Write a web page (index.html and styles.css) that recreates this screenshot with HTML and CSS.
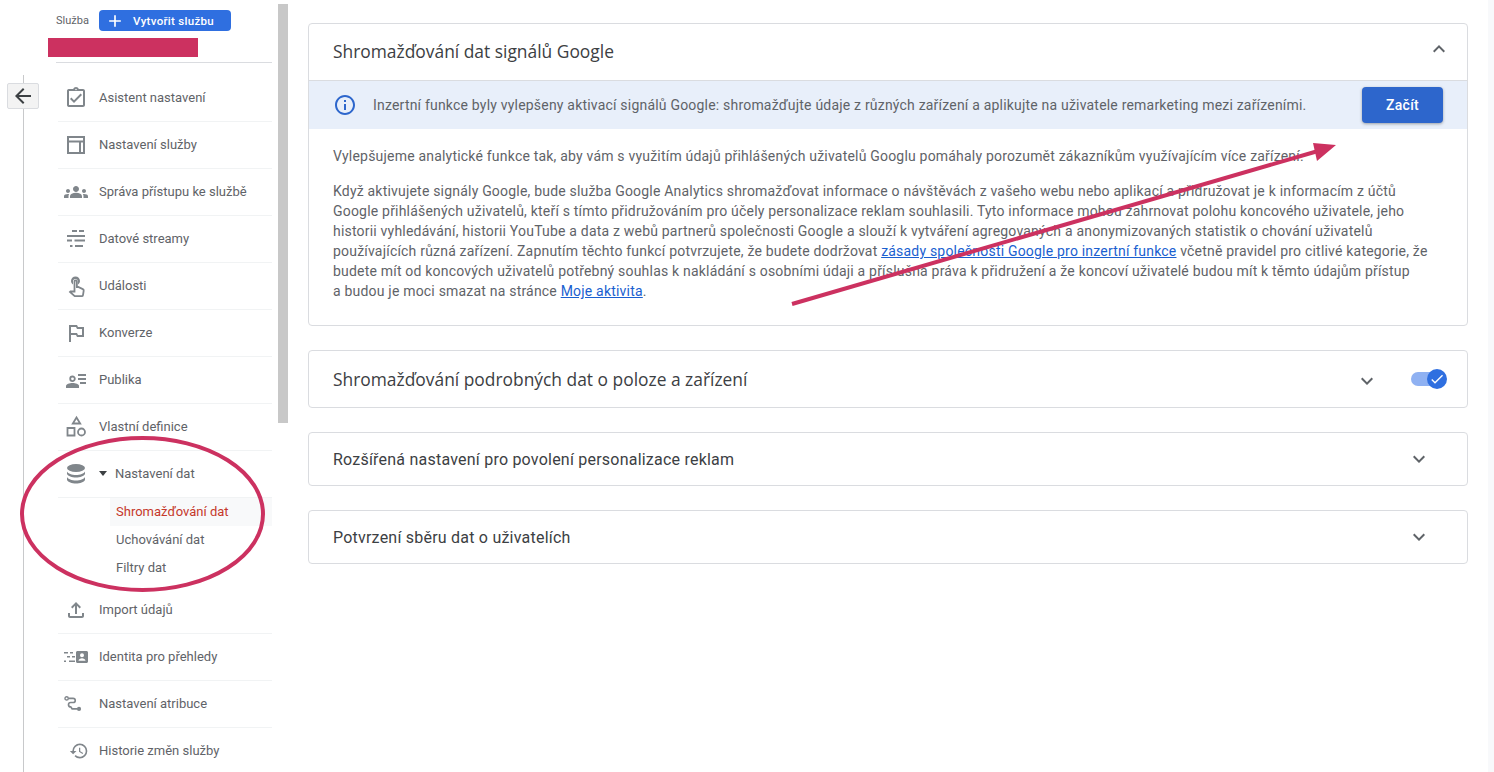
FILE: index.html
```html
<!DOCTYPE html>
<html lang="cs">
<head>
    <meta charset="UTF-8">
    <title>Shromažďování dat</title>
    <link rel="stylesheet" href="styles.css">
</head>
<body>
<div class="page">
    <!-- Back rail -->
    <div class="rail">
        <button class="back-btn">
            <svg viewBox="0 0 24 24" width="24" height="24"><path d="M20 11H7.83l5.59-5.59L12 4l-8 8 8 8 1.41-1.41L7.83 13H20v-2z"/></svg>
        </button>
    </div>

    <!-- Sidebar -->
    <div class="sidebar">
        <div class="side-head">
            <span class="side-label">Služba</span>
            <button class="create-btn">
                <svg viewBox="0 0 24 24" width="20" height="20"><path d="M19 13h-6v6h-2v-6H5v-2h6V5h2v6h6v2z"/></svg>
                Vytvořit službu
            </button>
        </div>
        <div class="side-picker"></div>

        <div class="nav-row">
            <svg class="nav-icon" viewBox="0 0 24 24"><path d="M18 9l-1.41-1.42L10 14.17l-2.59-2.58L6 13l4 4zm1-6h-4.18C14.4 1.84 13.3 1 12 1c-1.3 0-2.4.84-2.82 2H5c-.14 0-.27.01-.4.04-.39.08-.74.28-1.01.55-.18.18-.33.4-.43.64-.1.23-.16.49-.16.77v14c0 .27.06.54.16.78s.25.45.43.64c.27.27.62.47 1.01.55.13.02.26.03.4.03h14c1.1 0 2-.9 2-2V5c0-1.1-.9-2-2-2zm-7-.25c.41 0 .75.34.75.75s-.34.75-.75.75-.75-.34-.75-.75.34-.75.75-.75zM19 19H5V5h14v14z"/></svg>
            Asistent nastavení
        </div>
        <div class="nav-row">
            <svg class="nav-icon" viewBox="0 0 24 24"><path d="M3 3h18v18H3V3zm2 2v2.500h14V5H5zm0 4.500V19h10V9.500H5zm12 0V19h2V9.500h-2z"/></svg>
            Nastavení služby
        </div>
        <div class="nav-row">
            <svg class="nav-icon" viewBox="0 0 24 24"><path d="M4 13c1.1 0 2-.9 2-2s-.9-2-2-2-2 .9-2 2 .9 2 2 2zm1.13 1.1C4.76 14.04 4.39 14 4 14c-.99 0-1.93.21-2.78.58C.48 14.9 0 15.62 0 16.43V18h4.5v-1.61c0-.83.23-1.61.63-2.29zM20 13c1.1 0 2-.9 2-2s-.9-2-2-2-2 .9-2 2 .9 2 2 2zm4 3.43c0-.81-.48-1.53-1.22-1.85C21.93 14.21 20.99 14 20 14c-.39 0-.76.04-1.13.1.4.68.63 1.46.63 2.29V18H24v-1.57zM16.24 13.65c-1.17-.52-2.61-.9-4.24-.9-1.63 0-3.07.39-4.24.9C6.68 14.13 6 15.21 6 16.39V18h12v-1.61c0-1.18-.68-2.26-1.76-2.74zM12 12c1.66 0 3-1.34 3-3s-1.34-3-3-3-3 1.34-3 3 1.34 3 3 3z"/></svg>
            Správa přístupu ke službě
        </div>
        <div class="nav-row">
            <svg class="nav-icon" viewBox="0 0 24 24"><path d="M8 3h5v2H8zM15 3h5v2h-5zM3 8h18v2H3zM3 12.500h5v2H3zM10.500 12.500H21v2H10.500zM6 18h2.500v2H6zM11 18h8v2h-8z"/></svg>
            Datové streamy
        </div>
        <div class="nav-row">
            <svg class="nav-icon" viewBox="0 0 24 24"><path d="M9 10.500V7.500a2.500 2.500 0 0 1 5 0v3c1.200-.8 2-2 2-3.500 0-2.500-2-4.500-4.500-4.500S7 4.500 7 7c0 1.500.8 2.700 2 3.500z"/><path class="nav-line" d="M10.500 17.500V7.500a1.200 1.200 0 0 1 2.400 0V13h1.300l4.600 2.100c.6.300 1 .9.900 1.500l-.7 4.500c-.1.600-.7 1.100-1.300 1.100h-6.300c-.4 0-.7-.1-1-.4L6 17.900l.5-.5z"/></svg>
            Události
        </div>
        <div class="nav-row">
            <svg class="nav-icon" viewBox="0 0 24 24"><path d="M14 6l-1-2H5v17h2v-7h5l1 2h7V6h-6zm4 8h-4l-1-2H7V6h5l1 2h5v6z"/></svg>
            Konverze
        </div>
        <div class="nav-row">
            <svg class="nav-icon" viewBox="0 0 24 24"><path d="M14 6h8v2h-8zM14 10h8v2h-8zM16 14h6v2h-6z"/><path class="nav-line" d="M8.500 8.500a2.300 2.300 0 1 1 0 4.600 2.300 2.300 0 0 1 0-4.600z"/><path d="M2 20v-2c0-1.800 3.500-3 6.500-3s6.500 1.200 6.500 3v2H2z"/></svg>
            Publika
        </div>
        <div class="nav-row">
            <svg class="nav-icon" viewBox="0 0 24 24"><path class="nav-line" d="M12.500 2.500l3.700 6H8.800zM3.500 13h7v7.500h-7z"/><circle class="nav-line" cx="17.500" cy="17" r="3.500"/></svg>
            Vlastní definice
        </div>
        <div class="nav-row nav-open">
            <svg class="nav-icon" viewBox="0 0 24 24"><ellipse cx="12" cy="6" rx="9" ry="4"/><path d="M3 9.500c1 2.300 4.800 3.500 9 3.500s8-1.200 9-3.500V12c-1 2.300-4.800 3.500-9 3.500S4 14.300 3 12zM3 15c1 2.300 4.800 3.500 9 3.500s8-1.200 9-3.500v3c-1 2.300-4.800 3.500-9 3.500S4 20.300 3 18z"/></svg>
            <span class="caret"></span>
            Nastavení dat
        </div>
        <div class="sub-list">
            <div class="sub-item active">Shromažďování dat</div>
            <div class="sub-item">Uchovávání dat</div>
            <div class="sub-item">Filtry dat</div>
        </div>
        <div class="nav-row">
            <svg class="nav-icon" viewBox="0 0 24 24"><path d="M18 15v3H6v-3H4v3c0 1.100.9 2 2 2h12c1.100 0 2-.9 2-2v-3h-2zM7 9l1.410 1.410L11 7.830V16h2V7.830l2.590 2.580L17 9l-5-5-5 5z"/></svg>
            Import údajů
        </div>
        <div class="nav-row">
            <svg class="nav-icon" viewBox="0 0 24 24"><path d="M0 7h4v1.600H0zM6 7h3v1.600H6zM3 11h3v1.600H3zM8 11h3v1.600H8zM0 15.500h2v1.600H0zM5 15.500h6v1.600H5z"/><path fill-rule="evenodd" d="M13.500 6h9c.8 0 1.500.7 1.500 1.500v9c0 .8-.7 1.500-1.500 1.500h-9c-.8 0-1.500-.7-1.500-1.500v-9c0-.8.700-1.500 1.500-1.500zM18 8.200a2 2 0 1 0 0 4 2 2 0 0 0 0-4zM14.500 15.800h7c0-1.600-2-2.600-3.500-2.600s-3.500 1-3.500 2.600z"/></svg>
            Identita pro přehledy
        </div>
        <div class="nav-row">
            <svg class="nav-icon icon-route" viewBox="0 0 24 24"><circle class="nav-line" cx="3.500" cy="4.500" r="2.200"/><circle cx="20" cy="18.500" r="2.800"/><path class="nav-line route-line" d="M5.700 4.500H12c1.800 0 3 1.200 3 2.800s-1.200 2.700-3 2.700H9c-1.800 0-3 1.300-3 2.900 0 1.700 1.200 3 3 3 1 0 1 2.600 2 2.600h7"/></svg>
            Nastavení atribuce
        </div>
        <div class="nav-row">
            <svg class="nav-icon icon-small" viewBox="0 0 24 24"><path d="M13 3a9 9 0 0 0-9 9H1l3.890 3.890.07.140L9 12H6c0-3.870 3.130-7 7-7s7 3.130 7 7-3.130 7-7 7c-1.930 0-3.680-.79-4.940-2.060l-1.420 1.420A8.954 8.954 0 0 0 13 21a9 9 0 0 0 0-18zm-1 5v5l4.280 2.540.72-1.210-3.500-2.080V8H12z"/></svg>
            Historie změn služby
        </div>
    </div>

    <div class="scroll-track"><div class="scroll-thumb"></div></div>

    <!-- Main content -->
    <div class="main">
        <div class="card card-open">
            <div class="card-head head-big">
                <span class="card-title title-big title-raised">Shromažďování dat signálů Google</span>
                <svg class="chev chev-up" viewBox="0 0 24 24"><path d="M7.410 15.410L12 10.830l4.590 4.580L18 14l-6-6-6 6z"/></svg>
            </div>
            <div class="banner">
                <svg class="info-icon" viewBox="0 0 24 24"><path d="M11 7h2v2h-2zm0 4h2v6h-2zm1-9C6.480 2 2 6.480 2 12s4.480 10 10 10 10-4.480 10-10S17.520 2 12 2zm0 18c-4.410 0-8-3.590-8-8s3.590-8 8-8 8 3.590 8 8-3.590 8-8 8z"/></svg>
                <span class="banner-text">Inzertní funkce byly vylepšeny aktivací signálů Google: shromažďujte údaje z různých zařízení a aplikujte na uživatele remarketing mezi zařízeními.</span>
                <button class="start-btn">Začít</button>
            </div>
            <div class="card-body">
                <p>Vylepšujeme analytické funkce tak, aby vám s využitím údajů přihlášených uživatelů Googlu pomáhaly porozumět zákazníkům využívajícím více zařízení.</p>
                <p>Když aktivujete signály Google, bude služba Google Analytics shromažďovat informace o návštěvách z vašeho webu nebo aplikací a přidružovat je k informacím z účtů<br>
                Google přihlášených uživatelů, kteří s tímto přidružováním pro účely personalizace reklam souhlasili. Tyto informace mohou zahrnovat polohu koncového uživatele, jeho<br>
                historii vyhledávání, historii YouTube a data z webů partnerů společnosti Google a slouží k vytváření agregovaných a anonymizovaných statistik o chování uživatelů<br>
                používajících různá zařízení. Zapnutím těchto funkcí potvrzujete, že budete dodržovat <a href="#">zásady společnosti Google pro inzertní funkce</a> včetně pravidel pro citlivé kategorie, že<br>
                budete mít od koncových uživatelů potřebný souhlas k nakládání s osobními údaji a příslušná práva k přidružení a že koncoví uživatelé budou mít k těmto údajům přístup<br>
                a budou je moci smazat na stránce <a href="#">Moje aktivita</a>.</p>
            </div>
        </div>

        <div class="card">
            <div class="card-head head-mid">
                <span class="card-title title-big">Shromažďování podrobných dat o poloze a zařízení</span>
                <svg class="chev chev-mid" viewBox="0 0 24 24"><path d="M7.410 8.590L12 13.170l4.590-4.580L18 10l-6 6-6-6z"/></svg>
                <div class="toggle">
                    <span class="toggle-knob">
                        <svg viewBox="0 0 24 24" width="16" height="16"><path d="M9 16.170L4.830 12l-1.420 1.410L9 19 21 7l-1.410-1.410z"/></svg>
                    </span>
                </div>
            </div>
        </div>

        <div class="card">
            <div class="card-head">
                <span class="card-title">Rozšířená nastavení pro povolení personalizace reklam</span>
                <svg class="chev" viewBox="0 0 24 24"><path d="M7.410 8.590L12 13.170l4.590-4.580L18 10l-6 6-6-6z"/></svg>
            </div>
        </div>

        <div class="card">
            <div class="card-head">
                <span class="card-title">Potvrzení sběru dat o uživatelích</span>
                <svg class="chev" viewBox="0 0 24 24"><path d="M7.410 8.590L12 13.170l4.590-4.580L18 10l-6 6-6-6z"/></svg>
            </div>
        </div>
    </div>

    <div class="right-strip"></div>

    <!-- Annotations drawn over the screenshot -->
    <div class="redact"></div>
    <svg class="notes" viewBox="0 0 1494 772" width="1494" height="772">
        <ellipse cx="142.500" cy="514" rx="120.500" ry="76" fill="none" stroke="#cc3160" stroke-width="4"/>
        <line x1="792" y1="304" x2="1318" y2="151" stroke="#cc3160" stroke-width="4"/>
        <polygon points="1313,143 1336,145 1317,161" fill="#cc3160"/>
    </svg>
</div>
</body>
</html>
```

FILE: styles.css
```css
html, body {
    margin: 0;
    padding: 0;
    height: 100%;
    background: #fff;
    overflow: hidden;
    font-family: Roboto, "Liberation Sans", sans-serif;
    color: #5f6368;
}

.page {
    display: flex;
    position: relative;
    width: 1494px;
    height: 772px;
    overflow: hidden;
}

/* Back rail */
.rail {
    flex: 0 0 33px;
    width: 33px;
    margin: 75px 0 0 23px;
    border-left: 1px solid #c8c9cb;
    box-sizing: border-box;
}

.back-btn {
    position: absolute;
    left: 7px;
    top: 83px;
    width: 32px;
    height: 26px;
    padding: 0;
    display: flex;
    align-items: center;
    justify-content: center;
    background: #f3f3f3;
    border: 1px solid #dadce0;
    border-radius: 2px;
}

.back-btn svg {
    fill: #3c4043;
}

/* Sidebar */
.sidebar {
    flex: 0 0 216px;
    width: 216px;
}

.side-head {
    display: flex;
    align-items: center;
    height: 21px;
    margin-top: 10px;
}

.side-label {
    width: 43px;
    font-size: 11px;
    color: #5f6368;
}

.create-btn {
    display: flex;
    align-items: center;
    width: 132px;
    height: 21px;
    padding: 0 0 0 6px;
    background: #2f6fe0;
    border: none;
    border-radius: 4px;
    color: #fff;
    font-family: inherit;
    font-size: 11.500px;
    font-weight: 500;
    letter-spacing: 0.3px;
    gap: 8px;
    white-space: nowrap;
}

.create-btn svg {
    fill: #fff;
}

.side-picker {
    height: 31px;
    margin-bottom: 12px;
    border-bottom: 1px solid #dadce0;
}

.nav-row {
    display: flex;
    align-items: center;
    height: 45px;
    padding-bottom: 1px;
    margin-left: 2px;
    border-bottom: 1px solid #f1f3f4;
    font-size: 13px;
    color: #5f6368;
    white-space: nowrap;
}

.nav-icon {
    width: 24px;
    height: 24px;
    margin: 0 11px 0 6px;
    fill: #80868b;
    flex: none;
}

.icon-route {
    width: 18px;
    height: 18px;
    margin: 0 17px 0 6px;
}

.icon-small {
    width: 20px;
    height: 20px;
    margin: 0 10.500px;
}

.nav-line {
    fill: none;
    stroke: #80868b;
    stroke-width: 1.800;
}

.route-line {
    stroke-width: 2.200;
}

.caret {
    width: 0;
    height: 0;
    margin-right: 8px;
    border-left: 4.500px solid transparent;
    border-right: 4.500px solid transparent;
    border-top: 5px solid #3c4043;
}

.sub-list {
    padding-left: 54px;
    margin-bottom: 5px;
}

.sub-item {
    height: 28px;
    line-height: 28px;
    padding-left: 6px;
    font-size: 13px;
    color: #5f6368;
}

.sub-item.active {
    background: #f8f9fa;
    color: #c5382a;
}

/* Fake scrollbar column */
.scroll-track {
    flex: 0 0 10px;
    width: 10px;
    margin-left: 6px;
    padding-top: 4px;
}

.scroll-thumb {
    height: 419px;
    background: #c8c8c8;
}

/* Main column */
.main {
    flex: 0 0 1160px;
    width: 1160px;
    margin-left: 20px;
    padding-top: 23px;
    box-sizing: border-box;
}

.card {
    border: 1px solid #dadce0;
    border-radius: 4px;
    margin-bottom: 24px;
    background: #fff;
}

.card-head {
    display: flex;
    align-items: center;
    height: 52px;
    padding: 0 36px 0 24px;
}

.head-big {
    height: 56px;
}

.head-mid {
    height: 56px;
    padding-right: 18px;
}

.card-title {
    flex: 1;
    font-size: 16px;
    color: #3c4043;
    letter-spacing: 0.22px;
}

.title-big {
    font-size: 17.400px;
    letter-spacing: 0;
    font-family: "Open Sans", Roboto, sans-serif;
}

.title-raised {
    margin-top: -2px;
}

.chev {
    width: 24px;
    height: 24px;
    fill: #5f6368;
    flex: none;
}

.chev-up {
    margin: -6px -20px 0 0;
}

.chev-mid {
    margin: 4px 32px 0 0;
}

.toggle {
    position: relative;
    width: 34px;
    height: 14px;
    background: #8fb1f2;
    border-radius: 7px;
    margin-right: 4px;
}

.toggle-knob {
    position: absolute;
    right: -2px;
    top: -3px;
    width: 20px;
    height: 20px;
    display: flex;
    align-items: center;
    justify-content: center;
    background: #2f6fe0;
    border-radius: 50%;
}

.toggle-knob svg {
    fill: #fff;
}

.banner {
    display: flex;
    align-items: center;
    height: 48px;
    padding: 0 24px;
    background: #e8effa;
    border-top: 1px solid #dadce0;
}

.info-icon {
    width: 24px;
    height: 24px;
    fill: #2d66cc;
    flex: none;
    margin-right: 16px;
}

.banner-text {
    flex: 1;
    font-size: 14px;
    letter-spacing: 0.2px;
    white-space: nowrap;
}

.start-btn {
    width: 81px;
    height: 36px;
    background: #2d66cc;
    border: none;
    border-radius: 4px;
    color: #fff;
    font-family: inherit;
    font-size: 14px;
    font-weight: 500;
    letter-spacing: 0.3px;
    box-shadow: 0 1px 3px rgba(60, 64, 67, 0.45);
}

.card-body {
    padding: 17px 24px 24px;
    font-size: 14px;
    line-height: 20px;
    letter-spacing: 0.2px;
    white-space: nowrap;
}

.card-body p {
    margin: 0 0 15px;
}

.card-body p:last-child {
    margin-bottom: 0;
}

.card-body a {
    color: #1a5fd0;
}

.right-strip {
    flex: 1;
    margin-left: 20px;
    background: #f8f9fb;
}

/* Annotations */
.redact {
    position: absolute;
    left: 48px;
    top: 38px;
    width: 150px;
    height: 19px;
    background: #cc3160;
}

.notes {
    position: absolute;
    left: 0;
    top: 0;
    pointer-events: none;
}
```
